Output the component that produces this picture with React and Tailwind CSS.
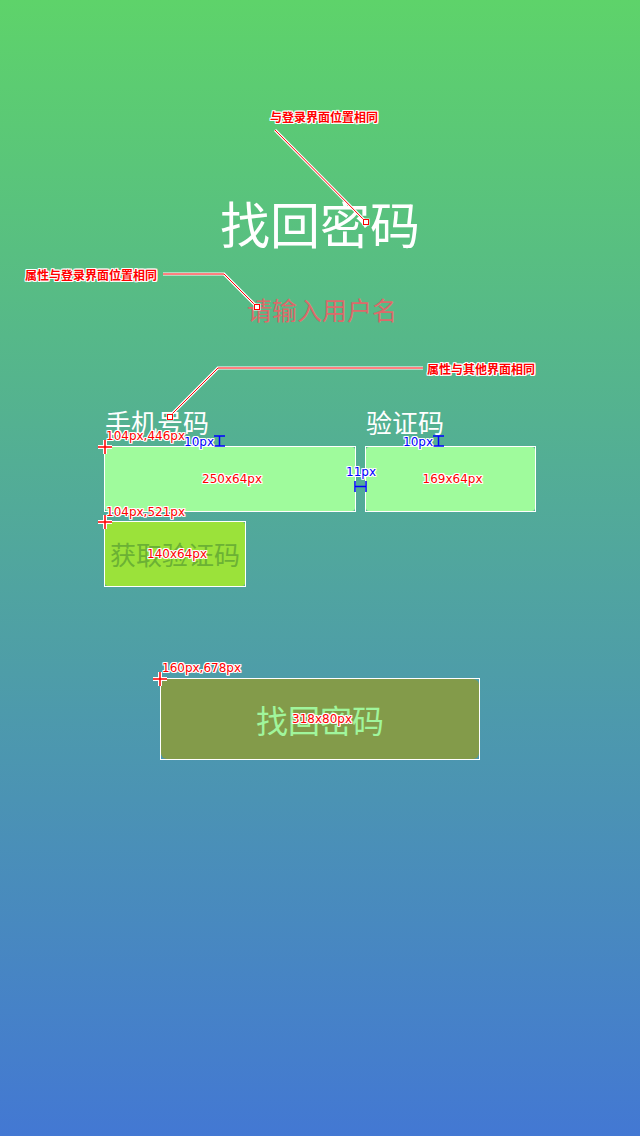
import React from "react";

const halo =
  "[text-shadow:1px_0_#fff,-1px_0_#fff,0_1px_#fff,0_-1px_#fff,1px_1px_#fff,-1px_-1px_#fff,1px_-1px_#fff,-1px_1px_#fff]";

function Note({ className, children }) {
  return (
    <span
      className={`absolute whitespace-nowrap text-[12px] leading-none font-bold text-[#ff0000] font-['Noto_Sans_CJK_SC',sans-serif] ${halo} ${className}`}
    >
      {children}
    </span>
  );
}

function Dim({ className, blue, children }) {
  return (
    <span
      className={`absolute whitespace-nowrap text-[12px] leading-none font-['DejaVu_Sans',sans-serif] ${
        blue ? "text-[#0000ff]" : "text-[#ff0000]"
      } ${halo} ${className}`}
    >
      {children}
    </span>
  );
}

function Size({ children }) {
  return (
    <span
      className={`absolute inset-0 flex items-center justify-center pl-[4px] text-[12px] leading-none text-[#ff0000] font-['DejaVu_Sans',sans-serif] ${halo}`}
    >
      {children}
    </span>
  );
}

// red leader line with white edge
function Lead({ points }) {
  return (
    <>
      <polyline points={points} fill="none" stroke="#fff" strokeWidth="3" />
      <polyline points={points} fill="none" stroke="#ff0000" strokeWidth="1" />
    </>
  );
}

function Dot({ x, y }) {
  return (
    <>
      <rect x={x - 3.5} y={y - 3.5} width="7" height="7" fill="#fff" />
      <rect x={x - 2.5} y={y - 2.5} width="5" height="5" fill="none" stroke="#ff0000" strokeWidth="1" />
    </>
  );
}

function Cross({ x, y }) {
  return (
    <>
      <path d={`M${x - 7} ${y}H${x + 7}M${x} ${y - 7}V${y + 7}`} stroke="#fff" strokeWidth="4" />
      <path d={`M${x - 7} ${y}H${x + 7}M${x} ${y - 7}V${y + 7}`} stroke="#ff0000" strokeWidth="1.5" />
    </>
  );
}

export default function App() {
  return (
    <div className="relative w-[640px] h-[1136px] overflow-hidden bg-[linear-gradient(to_bottom,#5ed36a,#4378d3)] font-['Noto_Sans_CJK_SC',sans-serif]">
      <h1 className="pt-[197px] text-center text-[50px] leading-none text-white">找回密码</h1>
      <p className="mt-[50px] pl-[4px] text-center text-[25px] leading-none text-[#dc6a6a]">请输入用户名</p>

      <div className="mt-[87px] pl-[104px]">
        <div className="flex gap-[9px]">
          <div className="w-[252px]">
            <label className="block pl-[1px] text-[26px] leading-none text-white">手机号码</label>
            <div className="relative mt-[11px] h-[66px] border border-white">
              <div className="h-full rounded-[3px] bg-[#9ffb9c]" />
              <Size>250x64px</Size>
            </div>
          </div>
          <div className="w-[171px]">
            <label className="block pl-[1px] text-[26px] leading-none text-white">验证码</label>
            <div className="relative mt-[11px] h-[66px] border border-white">
              <div className="h-full rounded-[3px] bg-[#9ffb9c]" />
              <Size>169x64px</Size>
            </div>
          </div>
        </div>

        <div className="relative mt-[9px] w-[142px] h-[66px] border border-white">
          <button className="w-full h-full rounded-[3px] bg-[#9be23a] text-[26px] leading-none text-[#6bb134]">
            获取验证码
          </button>
          <Size>140x64px</Size>
        </div>
      </div>

      <div className="mt-[91px] pl-[160px]">
        <div className="relative w-[320px] h-[82px] border border-white">
          <button className="w-full h-full rounded-[6px] bg-[#839b4a] text-[32px] leading-none text-[#a0f59c]">
            找回密码
          </button>
          <Size>318x80px</Size>
        </div>
      </div>

      {/* annotations */}
      <svg className="absolute inset-0 pointer-events-none" width="640" height="1136">
        <Lead points="275,130 365,221" />
        <Dot x={366} y={222} />
        <Lead points="163,274 224,274 257,307" />
        <Dot x={257} y={307} />
        <Lead points="423,368 218,368 170,416" />
        <Dot x={170} y={417} />

        <Cross x={105} y={447} />
        <Cross x={105} y={522} />
        <Cross x={160} y={679} />

        <g stroke="#0000ff" strokeWidth="1.5" fill="none">
          <path d="M214 436H225M219.5 436V446M214 446H225" />
          <path d="M433 436H444M438.5 436V446M433 446H444" />
          <path d="M355 481V492M366 481V492M355 486.5H366" />
        </g>
      </svg>

      <Note className="left-[270px] top-[111px]">与登录界面位置相同</Note>
      <Note className="left-[25px] top-[269px]">属性与登录界面位置相同</Note>
      <Note className="left-[427px] top-[363px]">属性与其他界面相同</Note>

      <Dim className="left-[106px] top-[430px]">104px,446px</Dim>
      <Dim className="left-[106px] top-[506px]">104px,521px</Dim>
      <Dim className="left-[162px] top-[662px]">160px,678px</Dim>
      <Dim blue className="left-[184px] top-[436px]">10px</Dim>
      <Dim blue className="left-[403px] top-[436px]">10px</Dim>
      <Dim blue className="left-[346px] top-[466px]">11px</Dim>
    </div>
  );
}
